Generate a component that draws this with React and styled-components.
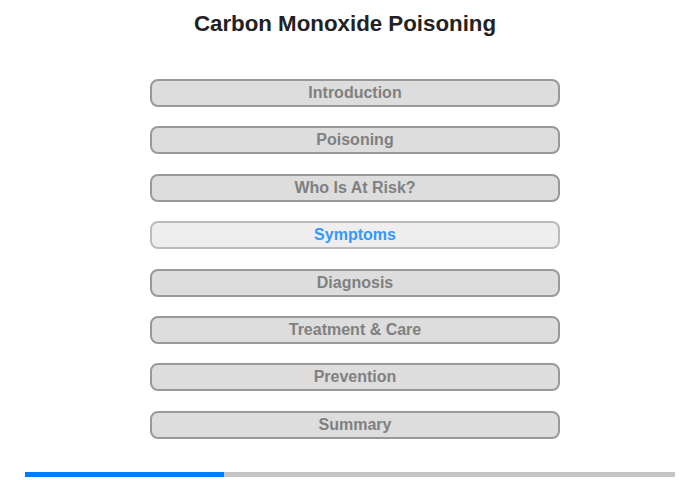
import React from "react";
import styled, { createGlobalStyle } from "styled-components";

const GlobalStyle = createGlobalStyle`
  body {
    margin: 0;
    background: #fff;
    font-family: "Liberation Sans", Arial, sans-serif;
  }
`;

const sections = [
  "Introduction",
  "Poisoning",
  "Who Is At Risk?",
  "Symptoms",
  "Diagnosis",
  "Treatment & Care",
  "Prevention",
  "Summary",
];

export default function App() {
  const current = 3;
  return (
    <Page>
      <GlobalStyle />
      <Title>Carbon Monoxide Poisoning</Title>
      <Menu>
        {sections.map((name, i) => (
          <MenuButton key={name} $active={i === current}>
            {name}
          </MenuButton>
        ))}
      </Menu>
      <Progress>
        <ProgressFill style={{ width: "199px" }} />
      </Progress>
    </Page>
  );
}

const Page = styled.div`
  width: 700px;
  height: 480px;
  display: flex;
  flex-direction: column;
`;

const Title = styled.h1`
  margin: 11px 10px 0 0;
  font-size: 22.3px;
  line-height: 26px;
  font-weight: bold;
  color: #222;
  text-align: center;
`;

const Menu = styled.nav`
  margin: 42px 0 0 150px;
  display: flex;
  flex-direction: column;
  gap: 19.4px;
`;

const MenuButton = styled.div`
  box-sizing: border-box;
  width: 410px;
  height: 28px;
  border: 2px solid ${(p) => (p.$active ? "#bbb" : "#999")};
  border-radius: 8px;
  background: ${(p) => (p.$active ? "#eee" : "#ddd")};
  color: ${(p) => (p.$active ? "#3399ff" : "#808080")};
  font-size: 16px;
  font-weight: bold;
  line-height: 24px;
  text-align: center;
  cursor: pointer;
`;

const Progress = styled.div`
  margin: auto 0 3px 25px;
  width: 650px;
  height: 5px;
  background: #c4c4c4;
`;

const ProgressFill = styled.div`
  height: 100%;
  background: #007bff;
`;
